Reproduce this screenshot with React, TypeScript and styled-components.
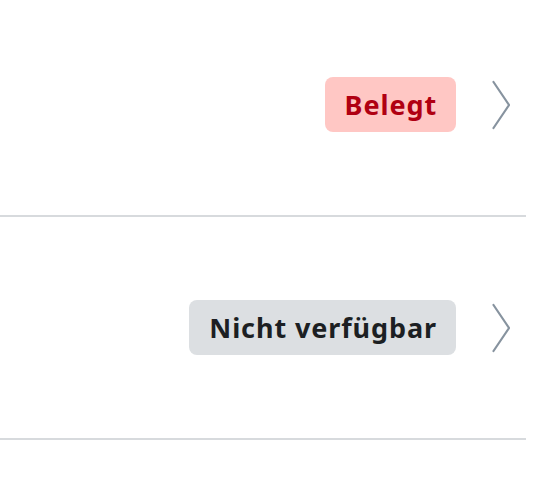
import React from "react";
import styled, { createGlobalStyle } from "styled-components";

const Global = createGlobalStyle`
  html, body { margin: 0; padding: 0; background: #ffffff; }
  body { font-family: "Noto Sans", "Open Sans", sans-serif; overflow: hidden; }
`;

const List = styled.ul`
  list-style: none;
  margin: -6px 0 0 0;
  padding: 0;
  width: 526px;
`;

const Row = styled.li`
  display: flex;
  align-items: center;
  justify-content: flex-end;
  gap: 34px;
  height: 221px;
  padding-right: 16px;
  border-bottom: 2px solid #d7dadd;
`;

type Tone = "danger" | "neutral";

const Badge = styled.span<{ $tone: Tone }>`
  display: inline-flex;
  align-items: center;
  height: 55px;
  padding: 0 19px 0 20px;
  border-radius: 8px;
  font-size: 27px;
  font-weight: 700;
  letter-spacing: 0.9px;
  background: ${(p) => (p.$tone === "danger" ? "#ffc7c4" : "#dcdfe2")};
  color: ${(p) => (p.$tone === "danger" ? "#b00012" : "#1c1f23")};
`;

const Chevron = styled.svg`
  width: 20px;
  height: 50px;
  flex: none;
`;

const ChevronIcon = () => (
  <Chevron viewBox="0 0 20 50">
    <path d="M3.5 2 L19 25 L3.5 48" fill="none" stroke="#87939f" strokeWidth="2.2" strokeLinecap="round" strokeLinejoin="miter" />
  </Chevron>
);

const rows: { label: string; tone: Tone }[] = [
  { label: "Belegt", tone: "danger" },
  { label: "Nicht verfügbar", tone: "neutral" },
];

export default function App() {
  return (
    <>
      <Global />
      <List>
        {rows.map((r) => (
          <Row key={r.label}>
            <Badge $tone={r.tone}>{r.label}</Badge>
            <ChevronIcon />
          </Row>
        ))}
      </List>
    </>
  );
}
